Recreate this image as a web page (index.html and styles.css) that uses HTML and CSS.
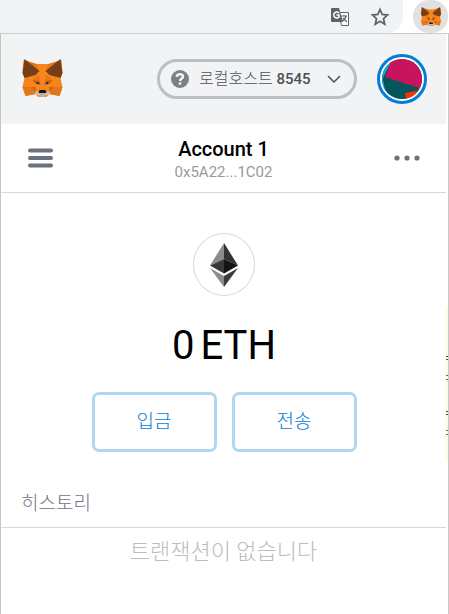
FILE: index.html
```html
<!DOCTYPE html>
<html lang="ko">
<head>
<meta charset="utf-8">
<title>MetaMask</title>
<link rel="stylesheet" href="styles.css">
</head>
<body>
<svg class="defs" aria-hidden="true">
  <symbol id="fox" viewBox="0 0 40 40">
    <path fill="#f6851b" d="M1 1 14 5H26L39 1 40 14 38 19 40 28 37 37 27 35 24 38H16L13 35 3 37 0 28 2 19 0 14Z"/>
    <path fill="#e2761b" d="M0 28H11L13 35 3 37ZM40 28H29L27 35 37 37ZM1 1 14 5 17 13ZM39 1 26 5 23 13Z"/>
    <path fill="#763d16" d="M2 0 17 12 13 16 2 19 0 14ZM38 0 23 12 27 16 38 19 40 14Z"/>
    <path fill="#e4761b" d="M10 21 16 16 18 26ZM30 21 24 16 22 26ZM8 28H13L14 35ZM32 28H27L26 35Z"/>
    <path fill="#cd6116" d="M10 21 17 22 18 26 12 24ZM30 21 23 22 22 26 28 24ZM9 28H13V33ZM31 28H27V33Z"/>
    <path fill="#c0ad9e" d="M14 34 17 31H23L26 34 23 38H17Z"/>
    <path fill="#d7c1b3" d="M13 32 17 34V36L13 35ZM27 32 23 34V36L27 35Z"/>
    <path fill="#161616" d="M17 31H23L24 34H16Z"/>
    <path fill="#233447" d="M14 23 16 23 17 25 14 25ZM26 23 24 23 23 25 26 25Z"/>
  </symbol>
</svg>
<div class="toolbar">
  <div class="omnibox">
    <button class="icon-button" aria-label="번역">
      <svg width="20" height="20" viewBox="0 0 20 20">
        <path fill="#fff" stroke="#5f6368" d="M8.500 5.500H18.500V18.500H11.500Z"/>
        <path fill="#5f6368" d="M2 1H9L13 15H2Q1 15 1 14V2Q1 1 2 1Z"/>
        <path fill="none" stroke="#fff" stroke-width="1.500" d="M9 6A3 3 0 1 0 9 10V8H6.500"/>
        <path fill="none" stroke="#5f6368" stroke-width="1.200" d="M11 9H17M14 8V9M16 9Q15 13 12 14M13 11 17 15"/>
      </svg>
    </button>
    <button class="icon-button" aria-label="북마크">
      <svg width="20" height="20" viewBox="0 0 20 20"><path fill="none" stroke="#5f6368" stroke-width="1.800" d="M10 2.500 12.200 7.500 17.500 8 13.500 11.700 14.700 17.200 10 14.300 5.300 17.200 6.500 11.700 2.500 8 7.800 7.500Z"/></svg>
    </button>
  </div>
  <button class="extension" aria-label="MetaMask"><svg width="22" height="20"><use href="#fox"/></svg></button>
</div>
<div class="stage">
  <main class="popup">
    <header class="header">
      <svg class="logo" width="41" height="40" aria-label="MetaMask"><use href="#fox"/></svg>
      <button class="network">
        <svg width="18" height="18" viewBox="0 0 18 18"><circle cx="9" cy="9" r="9" fill="#7c8084"/><path fill="none" stroke="#f2f3f4" stroke-width="2.400" d="M5.700 6.800Q6 4.300 9 4.300T12 6.800C12 8.800 9 8.500 9 11"/><path fill="#f2f3f4" d="M7.700 12.300H10.300V14.700H7.700Z"/></svg>
        <span class="network-name">로컬호스트 <span class="port">8545</span></span>
        <svg width="14" height="8" viewBox="0 0 14 8"><path fill="none" stroke="#4d5156" stroke-width="1.500" d="M1 1 7 7 13 1"/></svg>
      </button>
      <button class="avatar" aria-label="계정">
        <svg width="40" height="40" viewBox="0 0 40 40"><clipPath id="disc"><circle cx="20" cy="20" r="20"/></clipPath><g clip-path="url(#disc)"><path fill="#04555c" d="M0 0H40V40H0Z"/><path fill="#18a3e0" d="M0 0H12L6 10 1 21 6 34H0Z"/><path fill="#04555c" d="M7 7 1 19 3 31 7 36 20 30 12 12Z"/><path fill="#c8145c" d="M10 0H40V30L37 29 3 18Z"/><path fill="#fc2f05" d="M23 34 40 31V40H24Z"/></g></svg>
      </button>
    </header>
    <section class="account">
      <button class="icon-button" aria-label="메뉴"><svg width="26" height="20" viewBox="0 0 26 20"><path stroke="#6a737d" stroke-width="4" stroke-linecap="round" d="M3 2.500H24M3 10H24M3 17.500H24"/></svg></button>
      <div class="account-info">
        <h1 class="account-name">Account 1</h1>
        <div class="address">0x5A22...1C02</div>
      </div>
      <button class="icon-button" aria-label="계정 옵션"><svg width="26" height="6" viewBox="0 0 26 6"><g fill="#6a737d"><circle cx="3" cy="3" r="2.600"/><circle cx="13" cy="3" r="2.600"/><circle cx="23" cy="3" r="2.600"/></g></svg></button>
    </section>
    <section class="balance">
      <div class="token"><svg width="28" height="44" viewBox="0 0 28 44"><path fill="#8c8c8c" d="M14 0V16L0 22.500Z"/><path fill="#343434" d="M14 0V16L28 22.500Z"/><path fill="#393939" d="M14 16V30.500L0 22.500Z"/><path fill="#141414" d="M14 16V30.500L28 22.500Z"/><path fill="#8c8c8c" d="M0 25 14 33V44Z"/><path fill="#3c3c3b" d="M28 25 14 33V44Z"/></svg></div>
      <div class="amount"><span>0</span><span>ETH</span></div>
      <div class="actions">
        <button class="action">입금</button>
        <button class="action">전송</button>
      </div>
    </section>
    <section class="history">
      <h2 class="history-title">히스토리</h2>
      <p class="empty">트랜잭션이 없습니다</p>
    </section>
  </main>
</div>
</body>
</html>
```
FILE: styles.css
```css
* { box-sizing: border-box; }
body {
  margin: 0;
  min-height: 100vh;
  display: flex;
  flex-direction: column;
  background: #fff;
  font-family: Roboto, "Noto Sans CJK KR", sans-serif;
  font-weight: 400;
}
button { padding: 0; border: 0; background: none; font: inherit; }
svg { display: block; }
h1, h2, p { margin: 0; font-weight: 400; }
.defs { position: absolute; width: 0; height: 0; }
.icon-button { display: grid; place-items: center; }
.toolbar {
  display: flex;
  justify-content: space-between;
  height: 33px;
}
.omnibox {
  flex: 1;
  display: flex;
  justify-content: flex-end;
  gap: 20px;
  margin-right: 10px;
  padding-right: 13px;
  background: #f1f3f4;
  border-radius: 0 0 16px 0;
}
.extension {
  display: grid;
  place-items: center;
  width: 35px;
  height: 33px;
  margin-right: 1px;
  background: #e1e1e1;
  border-radius: 16px;
}
.stage {
  flex: 1;
  display: flex;
  padding-right: 2px;
  border-top: 1px solid #c9cbcd;
  border-left: 1px solid #c5c5c5;
  border-right: 1px solid #c9c9c9;
  background:
    linear-gradient(#544a32, #544a32) right 322px / 2px 1px no-repeat,
    linear-gradient(#544a32, #544a32) right 325px / 2px 1px no-repeat,
    linear-gradient(#666, #666) right 341px / 2px 1px no-repeat,
    linear-gradient(#666, #666) right 345px / 2px 1px no-repeat,
    linear-gradient(#544a32, #544a32) right 377px / 2px 1px no-repeat,
    linear-gradient(#544a32, #544a32) right 380px / 2px 1px no-repeat,
    linear-gradient(#666, #666) right 396px / 2px 1px no-repeat,
    linear-gradient(#666, #666) right 400px / 2px 1px no-repeat,
    linear-gradient(#fffbe3, #fffbe3) right 274px / 2px 153px no-repeat,
    #fff;
}
.popup { flex: 1; background: #fff; }
.header {
  display: flex;
  align-items: center;
  height: 90px;
  padding: 0 19px 0 21px;
  background: #f1f3f5;
}
.network {
  display: flex;
  align-items: center;
  gap: 10px;
  width: 200px;
  height: 40px;
  margin-left: auto;
  padding: 0 13px 0 11px;
  border: 3px solid #bbc0c5;
  border-radius: 20px;
  color: #4d5156;
}
.network-name {
  flex: 1;
  font-size: 16px;
  font-weight: 300;
  line-height: 20px;
  text-align: left;
  white-space: nowrap;
}
.port { font-size: 15px; font-weight: 500; }
.avatar {
  display: grid;
  place-items: center;
  width: 50px;
  height: 50px;
  margin-left: 20px;
  border: 3px solid #037dd6;
  border-radius: 50%;
  background: #fff;
}
.account {
  display: flex;
  align-items: center;
  justify-content: space-between;
  height: 69px;
  padding: 0 26px;
  border-bottom: 1px solid #d6d9dc;
}
.account-info { padding-top: 4px; text-align: center; }
.account-name { font-size: 20px; font-weight: 500; line-height: 24px; }
.address { font-size: 15px; line-height: 22px; color: #989a9b; }
.balance {
  display: flex;
  flex-direction: column;
  align-items: center;
  padding: 40px 0 0 1px;
}
.token {
  display: grid;
  place-items: center;
  width: 62px;
  height: 63px;
  border: 1px solid #d8d8d8;
  border-radius: 50%;
}
.amount {
  display: flex;
  gap: 6px;
  margin-top: 25px;
  font-size: 40px;
  line-height: 50px;
}
.actions { display: flex; gap: 15px; margin-top: 21px; }
.action {
  width: 125px;
  height: 60px;
  padding-bottom: 5px;
  border: 3px solid #b0d7f2;
  border-radius: 7px;
  color: #037dd6;
  font-size: 19px;
  font-weight: 300;
}
.history { padding-top: 38px; }
.history-title {
  padding: 0 20px 9px;
  border-bottom: 1px solid #d6d9dc;
  color: #6a737d;
  font-size: 19px;
  font-weight: 300;
  line-height: 28px;
}
.empty {
  padding-top: 10px;
  color: #bcbcbc;
  font-size: 22px;
  font-weight: 300;
  line-height: 28px;
  text-align: center;
}
```
